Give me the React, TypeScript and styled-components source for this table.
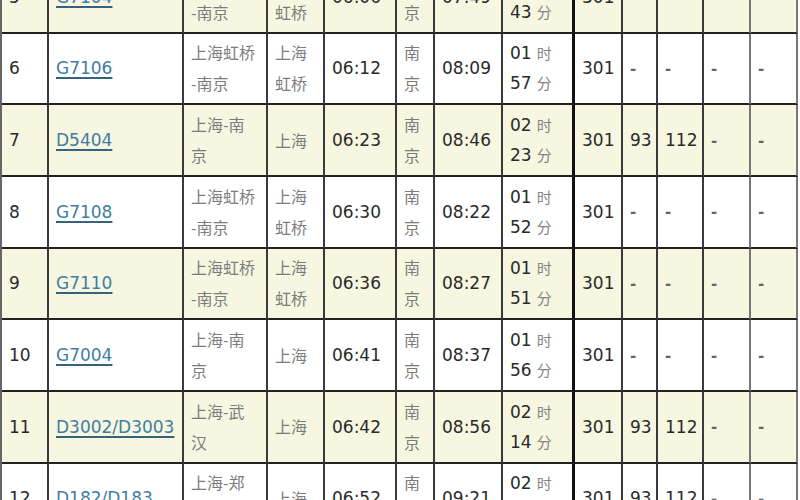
import React from 'react'
import styled, { createGlobalStyle } from 'styled-components'

const GlobalStyle = createGlobalStyle`
  html, body {
    margin: 0;
    padding: 0;
    background: #ffffff;
    overflow: hidden;
  }
  body {
    width: 800px;
    height: 500px;
  }
`

const Page = styled.div`
  width: 800px;
  height: 500px;
  overflow: hidden;
`

const Table = styled.table`
  margin-top: -40px;
  border-collapse: separate;
  border-spacing: 0;
  table-layout: fixed;
  width: 798px;
  border-top: 2px solid #222;
  border-left: 2px solid #666;
  font-family: 'DejaVu Sans', Verdana, sans-serif;
  font-size: 17px;
  color: #2a2a2a;
`

const Row = styled.tr<{ $alt: boolean }>`
  background: ${({ $alt }) => ($alt ? '#f6f6e1' : '#ffffff')};
`

const Cell = styled.td<{ $edge?: 'strong' | 'light' }>`
  box-sizing: border-box;
  height: 71.67px;
  padding: 0 0 0 7px;
  vertical-align: middle;
  white-space: nowrap;
  overflow: hidden;
  line-height: 30px;
  border-bottom: 2px solid #222;
  border-right: ${({ $edge }) =>
    $edge === 'strong' ? '3px solid #111' : $edge === 'light' ? '2px solid #777' : '2px solid #3a3a3a'};
`

const Zh = styled.span`
  font-family: 'Noto Sans CJK SC', sans-serif;
  font-size: 16px;
  color: #7c7c7c;
  font-weight: 400;
`

const Unit = styled.span`
  font-family: 'Noto Sans CJK SC', sans-serif;
  font-size: 15px;
  color: #858585;
  font-weight: 400;
  margin-left: 5px;
`

const TrainLink = styled.a`
  color: #3f7ea0;
  text-decoration: underline;
  text-decoration-color: #35627c;
  text-underline-offset: 3px;
  text-decoration-thickness: 2px;
`

const Dash = styled.span`
  color: #666;
  font-size: 15px;
  font-weight: bold;
`

type Train = {
  no: number
  code: string
  route: string[]
  from: string[]
  dep: string
  arr: string
  dur: [string, string]
  seat2: string
  seat1: string
  biz: string
}

const trains: Train[] = [
  { no: 5, code: 'G7104', route: ['上海虹桥', '-南京'], from: ['上海', '虹桥'], dep: '06:06', arr: '07:49', dur: ['01', '43'], seat2: '-', seat1: '-', biz: '-' },
  { no: 6, code: 'G7106', route: ['上海虹桥', '-南京'], from: ['上海', '虹桥'], dep: '06:12', arr: '08:09', dur: ['01', '57'], seat2: '-', seat1: '-', biz: '-' },
  { no: 7, code: 'D5404', route: ['上海-南', '京'], from: ['上海'], dep: '06:23', arr: '08:46', dur: ['02', '23'], seat2: '93', seat1: '112', biz: '-' },
  { no: 8, code: 'G7108', route: ['上海虹桥', '-南京'], from: ['上海', '虹桥'], dep: '06:30', arr: '08:22', dur: ['01', '52'], seat2: '-', seat1: '-', biz: '-' },
  { no: 9, code: 'G7110', route: ['上海虹桥', '-南京'], from: ['上海', '虹桥'], dep: '06:36', arr: '08:27', dur: ['01', '51'], seat2: '-', seat1: '-', biz: '-' },
  { no: 10, code: 'G7004', route: ['上海-南', '京'], from: ['上海'], dep: '06:41', arr: '08:37', dur: ['01', '56'], seat2: '-', seat1: '-', biz: '-' },
  { no: 11, code: 'D3002/D3003', route: ['上海-武', '汉'], from: ['上海'], dep: '06:42', arr: '08:56', dur: ['02', '14'], seat2: '93', seat1: '112', biz: '-' },
  { no: 12, code: 'D182/D183', route: ['上海-郑', '州'], from: ['上海'], dep: '06:52', arr: '09:21', dur: ['02', '29'], seat2: '93', seat1: '112', biz: '-' },
]

const widths = [47, 135, 84, 57, 72, 38, 68, 72, 48, 35, 46, 47, 47]

function Lines({ items }: { items: string[] }) {
  return (
    <Zh>
      {items.map((t, i) => (
        <React.Fragment key={i}>
          {i > 0 && <br />}
          {t}
        </React.Fragment>
      ))}
    </Zh>
  )
}

function Value({ v }: { v: string }) {
  return v === '-' ? <Dash>-</Dash> : <>{v}</>
}

export default function App() {
  return (
    <Page>
      <GlobalStyle />
      <Table>
        <colgroup>
          {widths.map((w, i) => (
            <col key={i} style={{ width: w }} />
          ))}
        </colgroup>
        <tbody>
          {trains.map((t) => (
            <Row key={t.no} $alt={t.no % 2 === 1}>
              <Cell>{t.no}</Cell>
              <Cell>
                <TrainLink href="#">{t.code}</TrainLink>
              </Cell>
              <Cell>
                <Lines items={t.route} />
              </Cell>
              <Cell>
                <Lines items={t.from} />
              </Cell>
              <Cell>{t.dep}</Cell>
              <Cell>
                <Lines items={['南', '京']} />
              </Cell>
              <Cell>{t.arr}</Cell>
              <Cell $edge="strong">
                {t.dur[0]}
                <Unit>时</Unit>
                <br />
                {t.dur[1]}
                <Unit>分</Unit>
              </Cell>
              <Cell>301</Cell>
              <Cell>
                <Value v={t.seat2} />
              </Cell>
              <Cell>
                <Value v={t.seat1} />
              </Cell>
              <Cell $edge="light">
                <Value v={t.biz} />
              </Cell>
              <Cell $edge="light">
                <Dash>-</Dash>
              </Cell>
            </Row>
          ))}
        </tbody>
      </Table>
    </Page>
  )
}
